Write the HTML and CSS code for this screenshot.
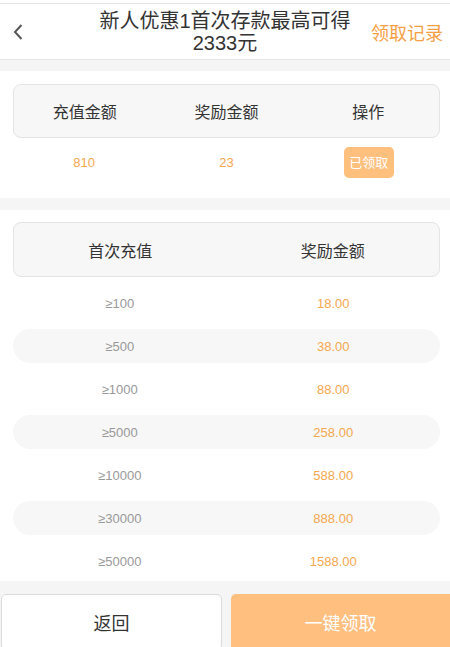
FILE: index.html
```html
<!DOCTYPE html>
<html>

<head>
    <meta charset="utf-8">
    <title>新人优惠</title>
    <link rel="stylesheet" href="styles.css">
</head>

<body>
    <div class="topbar">
        <div class="header">
            <div class="back">
                <svg width="12" height="18" viewBox="0 0 12 18">
                    <path d="M9.5 2 L3 9 L9.5 16" fill="none" stroke="#555" stroke-width="2" />
                </svg>
            </div>
            <div class="title">新人优惠1首次存款最高可得2333元</div>
            <div class="record">领取记录</div>
        </div>
    </div>

    <div class="card card-top">
        <div class="thead cols-3">
            <div>充值金额</div>
            <div>奖励金额</div>
            <div>操作</div>
        </div>
        <div class="drow cols-3">
            <div class="orange">810</div>
            <div class="orange">23</div>
            <div><span class="done-btn">已领取</span></div>
        </div>
    </div>

    <div class="card card-rules">
        <div class="thead cols-2">
            <div>首次充值</div>
            <div>奖励金额</div>
        </div>
        <div class="rules">
            <div class="rule cols-2"><div class="gray">≥100</div><div class="orange">18.00</div></div>
            <div class="rule cols-2 alt"><div class="gray">≥500</div><div class="orange">38.00</div></div>
            <div class="rule cols-2"><div class="gray">≥1000</div><div class="orange">88.00</div></div>
            <div class="rule cols-2 alt"><div class="gray">≥5000</div><div class="orange">258.00</div></div>
            <div class="rule cols-2"><div class="gray">≥10000</div><div class="orange">588.00</div></div>
            <div class="rule cols-2 alt"><div class="gray">≥30000</div><div class="orange">888.00</div></div>
            <div class="rule cols-2"><div class="gray">≥50000</div><div class="orange">1588.00</div></div>
        </div>
    </div>

    <div class="actions">
        <button class="btn btn-back">返回</button>
        <button class="btn btn-claim">一键领取</button>
    </div>
</body>

</html>
```

FILE: styles.css
```css
body {
    margin: 0;
    background: #f5f5f5;
    font-family: "Liberation Sans", "Noto Sans CJK SC", sans-serif;
    color: #333;
}

.topbar {
    background: #fff;
    padding-top: 3px;
}

.header {
    height: 55px;
    background: #fff;
    border-top: 1px solid #e6e6e6;
    border-bottom: 1px solid #e6e6e6;
    display: grid;
    grid-template-columns: 1fr 270px 1fr;
    align-items: center;
}

.back {
    padding-left: 12px;
    display: flex;
    align-items: center;
}

.title {
    font-size: 20px;
    line-height: 22px;
    text-align: center;
    color: #333;
}

.record {
    justify-self: end;
    padding-right: 7px;
    font-size: 18px;
    color: #f5a043;
}

.card {
    background: #fff;
    padding: 13px 10px 0 13px;
}

.card-top {
    margin-top: 11px;
    padding-bottom: 12px;
}

.card-rules {
    margin-top: 12px;
    padding-top: 12px;
    padding-bottom: 3px;
}

.thead {
    height: 54px;
    box-sizing: border-box;
    background: #f7f7f7;
    border: 1px solid #e4e4e4;
    border-radius: 8px;
    align-items: center;
    font-size: 16px;
    color: #333;
}

.card-rules .thead {
    height: 55px;
}

.cols-3 {
    display: grid;
    grid-template-columns: 1fr 1fr 1fr;
    text-align: center;
}

.cols-2 {
    display: grid;
    grid-template-columns: 1fr 1fr;
    text-align: center;
}

.drow {
    height: 48px;
    align-items: center;
    font-size: 13px;
}

.drow > div {
    display: flex;
    justify-content: center;
    align-items: center;
}

.orange {
    color: #f5a84e;
}

.gray {
    color: #999;
}

.done-btn {
    display: inline-block;
    width: 50px;
    height: 31px;
    line-height: 31px;
    border-radius: 5px;
    background: #ffc07e;
    color: #fff;
    font-size: 13px;
    text-align: center;
}

.rules {
    display: flex;
    flex-direction: column;
    gap: 9px;
    padding-top: 9px;
}

.rule {
    height: 34px;
    align-items: center;
    font-size: 13px;
    border-radius: 17px;
}

.rule.alt {
    background: #f7f7f7;
}

.actions {
    display: flex;
    gap: 9px;
    margin-top: 13px;
    padding-left: 1px;
}

.btn {
    flex: 1;
    height: 56px;
    border-radius: 5px;
    font-family: "Liberation Sans", "Noto Sans CJK SC", sans-serif;
    font-size: 18px;
    border: none;
}

.btn-back {
    background: #fff;
    border: 1px solid #dcdcdc;
    color: #333;
}

.btn-claim {
    background: #ffc07f;
    color: #fff;
    border-radius: 5px 0 0 0;
}
```
